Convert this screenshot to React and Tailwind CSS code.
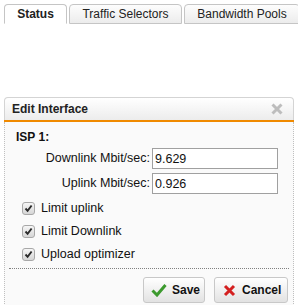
import React, { useState } from 'react'

const font = { fontFamily: '"Liberation Sans", Arial, sans-serif' }

function Tab({ label, active }) {
  return (
    <div
      className={`h-[20px] flex items-center justify-center rounded-t-[4px] border border-[#c5c5c5] text-[12px] text-[#222] ${active ? 'bg-white border-b-white font-bold' : 'bg-gradient-to-b from-[#fdfdfd] to-[#ececec]'}`}
    >
      {label}
    </div>
  )
}

function Check({ label }) {
  return (
    <label className="flex items-center gap-[6px] h-[23px] text-[12.5px] text-[#111]">
      <span className="w-[13px] h-[13px] rounded-[3px] border border-[#a8a8a8] bg-gradient-to-b from-[#f6f6f6] to-[#d6d6d6] flex items-center justify-center">
        <svg width="9" height="9" viewBox="0 0 9 9">
          <path d="M1.5 4.5 L3.6 6.8 L7.6 1.5" fill="none" stroke="#2a2a2a" strokeWidth="1.9" />
        </svg>
      </span>
      {label}
    </label>
  )
}

export default function App() {
  const [down, setDown] = useState('9.629')
  const [up, setUp] = useState('0.926')

  return (
    <div className="w-[298px] h-[305px] bg-white overflow-hidden" style={font}>
      {/* tabs */}
      <div className="grid grid-cols-[63px_113px_116px] gap-[2px] pl-[4px] pt-[4px]">
        <Tab label="Status" active />
        <Tab label="Traffic Selectors" />
        <Tab label="Bandwidth Pools" />
      </div>

      {/* dialog */}
      <div className="mt-[73px] ml-[4px] w-[290px]">
        <div className="h-[23px] flex items-center justify-between pl-[7px] pr-[10px] rounded-t-[4px] border border-[#d4d4d4] border-b-0 bg-gradient-to-b from-white to-[#ececec]">
          <span className="text-[12px] font-bold text-[#222]">Edit Interface</span>
          <svg width="12" height="12" viewBox="0 0 12 12">
            <path d="M1.5 1.5 L10.5 10.5 M10.5 1.5 L1.5 10.5" stroke="#bdbdbd" strokeWidth="3" />
          </svg>
        </div>
        <div className="h-[2px] bg-[#f08a00]" />
        <div className="border-x border-dotted border-[#c0c0c0] bg-[#fafafa] h-[200px] px-[4px]">
          <div className="pl-[7px] pt-[8px] h-[23px] leading-[15px] text-[12px] font-bold text-[#111]">ISP 1:</div>
          <div className="grid grid-cols-[141px_126px] gap-x-[2px] gap-y-[4px] items-center mt-[3px] text-[12.5px] text-[#111]">
            <span className="text-right">Downlink Mbit/sec:</span>
            <input
              className="h-[21px] border border-[#a0a0a0] bg-white px-[2px] text-[12.5px] outline-none"
              value={down}
              onChange={e => setDown(e.target.value)}
            />
            <span className="text-right">Uplink Mbit/sec:</span>
            <input
              className="h-[21px] border border-[#a0a0a0] bg-white px-[2px] text-[12.5px] outline-none"
              value={up}
              onChange={e => setUp(e.target.value)}
            />
          </div>
          <div className="pl-[13px] mt-[3px] flex flex-col">
            <Check label="Limit uplink" />
            <Check label="Limit Downlink" />
            <Check label="Upload optimizer" />
          </div>
          <div className="mt-[2px] border-t border-dotted border-[#808080]" />
          <div className="flex justify-end gap-[9px] mt-[8px] pr-[1px]">
            <button className="w-[62px] h-[26px] pl-[7px] flex items-center gap-[5px] rounded-[3px] border border-[#c8c8c8] bg-gradient-to-b from-white to-[#e2e2e2] text-[12px] font-bold text-[#111]">
              <svg width="16" height="14" viewBox="0 0 16 14">
                <path d="M1.5 7.5 L6 12 L14.5 2" fill="none" stroke="#3c9a2e" strokeWidth="3" />
              </svg>
              Save
            </button>
            <button className="w-[74px] h-[26px] pl-[8px] flex items-center gap-[6px] rounded-[3px] border border-[#c8c8c8] bg-gradient-to-b from-white to-[#e2e2e2] text-[12px] font-bold text-[#111]">
              <svg width="13" height="13" viewBox="0 0 13 13">
                <path d="M2 2 L11 11 M11 2 L2 11" stroke="#d42020" strokeWidth="3" />
              </svg>
              Cancel
            </button>
          </div>
        </div>
      </div>
    </div>
  )
}
